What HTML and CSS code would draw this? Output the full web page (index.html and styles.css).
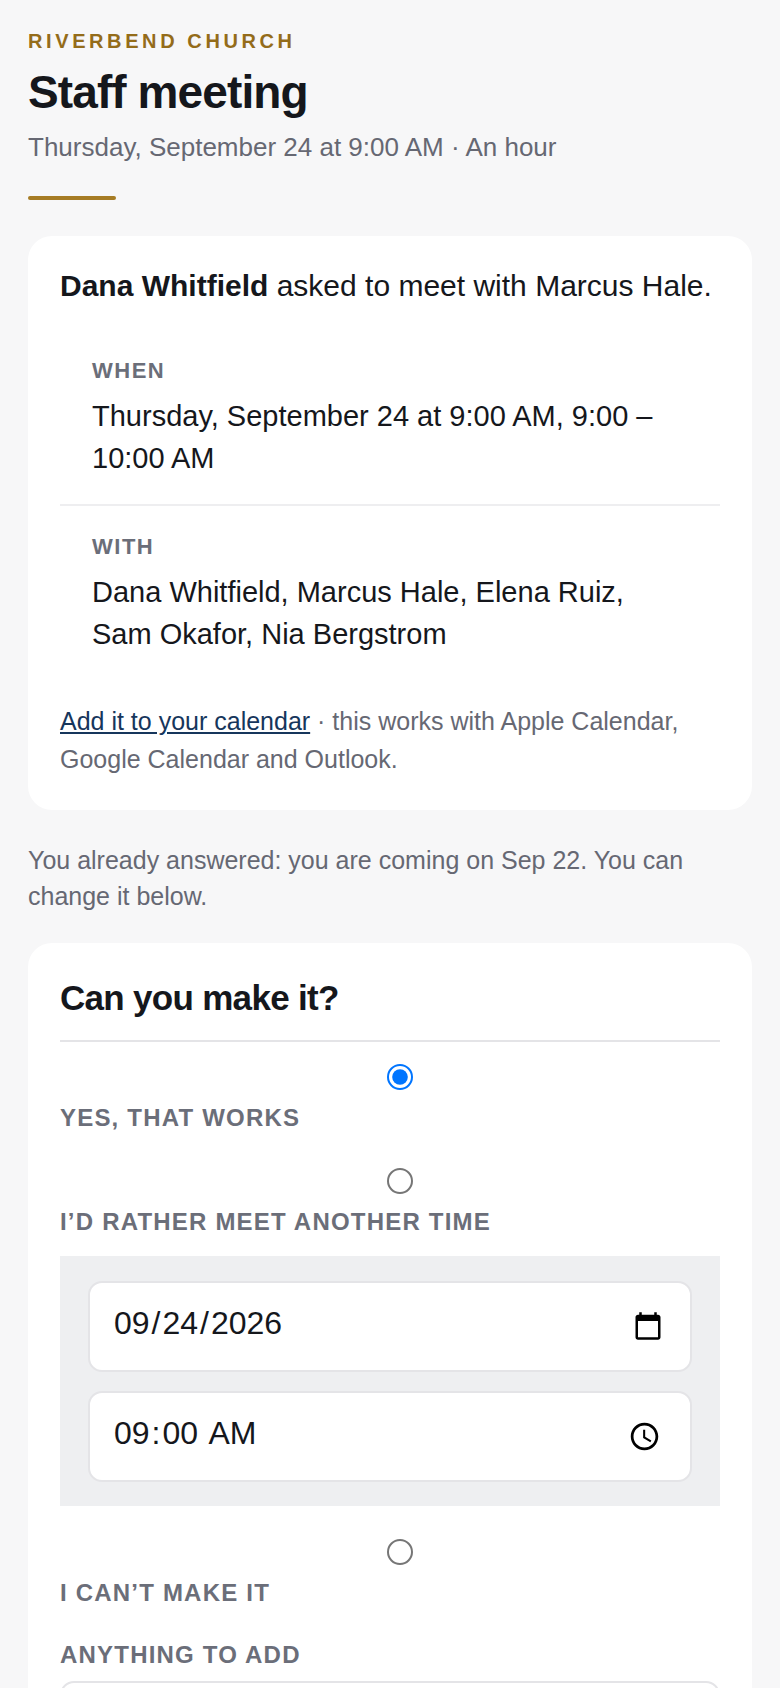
FILE: index.html
```html
<!DOCTYPE html>
<html lang="en">
<head>
    <meta charset="UTF-8">
    <meta name="viewport" content="width=device-width, initial-scale=1.0">
    <title>Staff meeting</title>
    <link rel="stylesheet" href="styles.css">
</head>
<body>
    <header class="top">
        <p class="org">Riverbend Church</p>
        <h1>Staff meeting</h1>
        <p class="sub">Thursday, September 24 at 9:00 AM · An hour</p>
        <div class="accent"></div>
    </header>

    <section class="card">
        <p class="lead"><strong>Dana Whitfield</strong> asked to meet with Marcus Hale.</p>
        <div class="detail">
            <div class="detail-label">When</div>
            <div class="detail-value">Thursday, September 24 at 9:00 AM, 9:00 – 10:00 AM</div>
        </div>
        <div class="detail">
            <div class="detail-label">With</div>
            <div class="detail-value">Dana Whitfield, Marcus Hale, Elena Ruiz, Sam Okafor, Nia Bergstrom</div>
        </div>
        <p class="cal"><a href="#">Add it to your calendar</a> · this works with Apple Calendar, Google Calendar and Outlook.</p>
    </section>

    <p class="note">You already answered: you are coming on Sep 22. You can change it below.</p>

    <form class="card answer">
        <h2>Can you make it?</h2>

        <div class="option">
            <input type="radio" name="answer" id="yes" checked>
            <label for="yes">Yes, that works</label>
        </div>

        <div class="option option-open">
            <input type="radio" name="answer" id="other">
            <label for="other">I’d rather meet another time</label>
            <div class="other-time">
                <input type="date" value="2026-09-24">
                <input type="time" value="09:00">
            </div>
        </div>

        <div class="option">
            <input type="radio" name="answer" id="no">
            <label for="no">I can’t make it</label>
        </div>

        <label class="add" for="add">Anything to add</label>
        <textarea id="add" rows="3"></textarea>
    </form>
</body>
</html>
```

FILE: styles.css
```css
body {
    font-family: "Liberation Sans", Arial, sans-serif;
    margin: 0;
    padding: 28px 28px 40px;
    background-color: #f7f7f8;
    color: #15171c;
    font-size: 29px;
}

p {
    margin: 0;
}

.org {
    font-size: 20px;
    font-weight: 700;
    letter-spacing: 3.6px;
    text-transform: uppercase;
    color: #946c1a;
    line-height: 26px;
}

h1 {
    font-size: 46px;
    font-weight: 700;
    letter-spacing: -0.9px;
    line-height: 56px;
    margin: 10px 0 0;
}

.sub {
    font-size: 26px;
    line-height: 36px;
    color: #666873;
    margin-top: 9px;
}

.accent {
    width: 88px;
    height: 4px;
    border-radius: 2px;
    background-color: #a67c25;
    margin-top: 31px;
}

.card {
    background-color: #fff;
    border-radius: 24px;
    padding: 32px;
    margin-top: 36px;
}

.lead {
    font-size: 30px;
    line-height: 36px;
    margin-bottom: 26px;
}

.detail {
    padding: 27px 32px 25px;
    border-bottom: 2px solid #eeeef0;
}

.detail:last-of-type {
    border-bottom: none;
}

.detail-label {
    font-size: 22px;
    font-weight: 700;
    letter-spacing: 1.5px;
    text-transform: uppercase;
    color: #6b6e79;
    line-height: 28px;
}

.detail-value {
    line-height: 42px;
    margin-top: 10px;
}

.cal {
    font-size: 25px;
    line-height: 38px;
    color: #666873;
    margin-top: 22px;
}

.cal a {
    color: #16365c;
}

.note {
    font-size: 25px;
    line-height: 36px;
    color: #666873;
    margin-top: 32px;
}

.answer {
    margin-top: 29px;
}

h2 {
    font-size: 35px;
    font-weight: 700;
    letter-spacing: -0.7px;
    line-height: 46px;
    margin: 0;
    padding-bottom: 19px;
    border-bottom: 2px solid #e4e4e7;
}

.option {
    margin-top: 36px;
}

h2 + .option {
    margin-top: 22px;
}

.option-open + .option {
    margin-top: 33px;
}

input[type="radio"] {
    display: block;
    width: 13px;
    height: 13px;
    zoom: 2;
    margin: 0 0 7px 163.5px;
}

label {
    display: block;
    font-size: 24px;
    font-weight: 700;
    letter-spacing: 1.2px;
    text-transform: uppercase;
    color: #6b6e79;
    line-height: 28px;
}

.other-time {
    background-color: #eeeff1;
    padding: 25px 28px 24px;
    margin-top: 20px;
}

.other-time input {
    display: block;
    width: 100%;
    height: 45.5px;
    box-sizing: border-box;
    zoom: 2;
    font-family: inherit;
    font-size: 16px;
    padding: 0 11px;
    color: #15171c;
    background-color: #fff;
    border: 1px solid #e4e4e7;
    border-radius: 7px;
}

.other-time input::-webkit-datetime-edit {
    margin-top: -3px;
}

.other-time input + input {
    margin-top: 9.5px;
}

.add {
    margin-top: 34px;
    margin-bottom: 12px;
}

textarea {
    display: block;
    width: 100%;
    box-sizing: border-box;
    font-family: inherit;
    font-size: 33px;
    padding: 24px;
    background-color: #fff;
    border: 2px solid #e4e4e7;
    border-radius: 14px;
    resize: vertical;
}
```
